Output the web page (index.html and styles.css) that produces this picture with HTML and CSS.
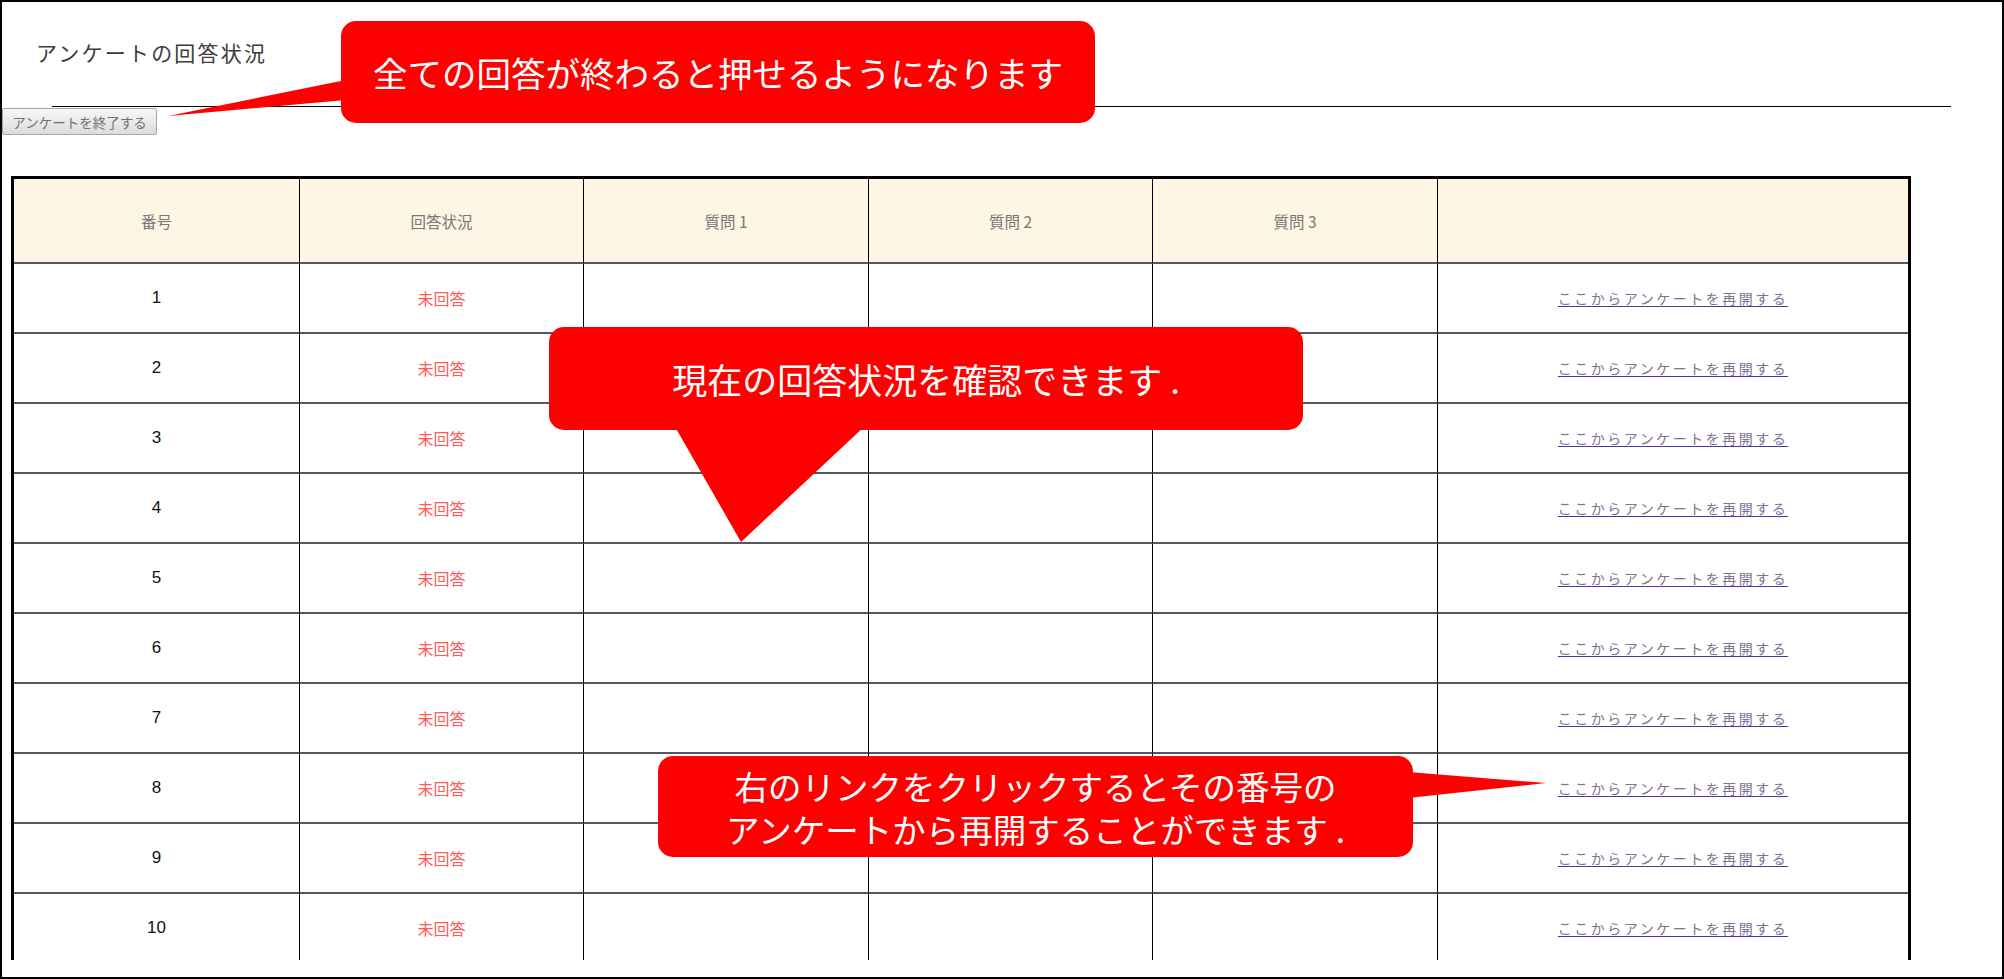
FILE: index.html
```html
<!DOCTYPE html>
<html lang="ja">
<head>
<meta charset="utf-8">
<title>アンケートの回答状況</title>
<link rel="stylesheet" href="styles.css">
</head>
<body>
<div class="frame">
  <div class="viewport">
    <div class="title">アンケートの回答状況</div>
    <div class="rule"></div>
    <button class="end-btn" type="button">アンケートを終了する</button>
    <table class="status">
      <thead>
        <tr>
          <th class="c1">番号</th>
          <th class="c2">回答状況</th>
          <th class="c3">質問 1</th>
          <th class="c4">質問 2</th>
          <th class="c5">質問 3</th>
          <th class="c6"></th>
        </tr>
      </thead>
      <tbody>
        <tr><td class="num">1</td><td class="st">未回答</td><td></td><td></td><td></td><td class="lk"><a class="resume" href="#">ここからアンケートを再開する</a></td></tr>
        <tr><td class="num">2</td><td class="st">未回答</td><td></td><td></td><td></td><td class="lk"><a class="resume" href="#">ここからアンケートを再開する</a></td></tr>
        <tr><td class="num">3</td><td class="st">未回答</td><td></td><td></td><td></td><td class="lk"><a class="resume" href="#">ここからアンケートを再開する</a></td></tr>
        <tr><td class="num">4</td><td class="st">未回答</td><td></td><td></td><td></td><td class="lk"><a class="resume" href="#">ここからアンケートを再開する</a></td></tr>
        <tr><td class="num">5</td><td class="st">未回答</td><td></td><td></td><td></td><td class="lk"><a class="resume" href="#">ここからアンケートを再開する</a></td></tr>
        <tr><td class="num">6</td><td class="st">未回答</td><td></td><td></td><td></td><td class="lk"><a class="resume" href="#">ここからアンケートを再開する</a></td></tr>
        <tr><td class="num">7</td><td class="st">未回答</td><td></td><td></td><td></td><td class="lk"><a class="resume" href="#">ここからアンケートを再開する</a></td></tr>
        <tr><td class="num">8</td><td class="st">未回答</td><td></td><td></td><td></td><td class="lk"><a class="resume" href="#">ここからアンケートを再開する</a></td></tr>
        <tr><td class="num">9</td><td class="st">未回答</td><td></td><td></td><td></td><td class="lk"><a class="resume" href="#">ここからアンケートを再開する</a></td></tr>
        <tr><td class="num">10</td><td class="st">未回答</td><td></td><td></td><td></td><td class="lk"><a class="resume" href="#">ここからアンケートを再開する</a></td></tr>
      </tbody>
    </table>
  </div>

  <div class="overlay">
    <svg class="pointers" width="2004" height="979" viewBox="0 0 2004 979" xmlns="http://www.w3.org/2000/svg">
      <polygon points="346,80 346,100 168,116" fill="#ff0000"/>
      <polygon points="674,425 866,425 741,542" fill="#ff0000"/>
      <polygon points="1408,772 1408,798 1546,783" fill="#ff0000"/>
    </svg>
    <div class="callout callout-1"><p class="callout-text">全ての回答が終わると押せるようになります</p></div>
    <div class="callout callout-2"><p class="callout-text">現在の回答状況を確認できます<span class="dot">.</span></p></div>
    <div class="callout callout-3"><p class="callout-text">右のリンクをクリックするとその番号の<br>アンケートから再開することができます<span class="dot">.</span></p></div>
  </div>
</div>
</body>
</html>
```

FILE: styles.css
```css
html, body {
  margin: 0;
  padding: 0;
  background: #ffffff;
}

body {
  font-family: "Noto Sans CJK JP", "Noto Sans", sans-serif;
}

.frame {
  position: relative;
  width: 2004px;
  height: 979px;
  border: 2px solid #000;
  box-sizing: border-box;
  overflow: hidden;
  background: #fff;
}

.viewport {
  height: 958px;
  overflow: hidden;
}

.title {
  padding: 35px 0 0 34px;
  font-size: 21px;
  line-height: 30px;
  letter-spacing: 2.2px;
  color: #3d3d3d;
}

.rule {
  margin: 39px 0 0 50px;
  width: 1899px;
  height: 0;
  border-top: 1px solid #000;
}

.end-btn {
  display: block;
  margin: 1px 0 0 0;
  width: 155px;
  height: 27px;
  padding: 0;
  font-family: "Noto Sans CJK JP", sans-serif;
  font-size: 13.5px;
  color: #707070;
  background: linear-gradient(#f7f7f7, #dcdcdc);
  border: 1px solid #a6a6a6;
  border-radius: 2px;
  box-sizing: border-box;
}

.status {
  margin: 41px 0 0 9px;
  width: 1900px;
  table-layout: fixed;
  border-collapse: separate;
  border-spacing: 0;
  border: 3px solid #000;
  border-bottom: none;
}

.status th,
.status td {
  padding: 0;
  text-align: center;
  vertical-align: middle;
  border-right: 1px solid #000;
  border-bottom: 2px solid #585858;
  box-sizing: border-box;
}

.status th:last-child,
.status td:last-child {
  border-right: none;
}

.status th {
  height: 85px;
  background: #fef5e4;
  font-weight: normal;
  font-size: 15.5px;
  color: #777;
}

.status td {
  height: 70px;
}

.c1 { width: 286px; }
.c2 { width: 284px; }
.c3 { width: 285px; }
.c4 { width: 284px; }
.c5 { width: 285px; }
.c6 { width: 470px; }

.num {
  font-family: "Liberation Sans", Arial, sans-serif;
  font-size: 17px;
  color: #111;
}

.st {
  font-size: 16px;
  color: #ff5a5a;
}

.lk {
  font-size: 14px;
  line-height: 18px;
}

.resume {
  font-size: 14px;
  letter-spacing: 2.5px;
  color: #7d7393;
  text-decoration: underline;
  text-decoration-color: #5f2fa0;
  text-underline-offset: 2px;
}

.overlay {
  position: absolute;
  left: -2px;
  top: -2px;
  width: 2004px;
  height: 979px;
  pointer-events: none;
}

.pointers {
  position: absolute;
  left: 0;
  top: 0;
}

.callout {
  position: absolute;
  display: flex;
  align-items: center;
  justify-content: center;
  background: #ff0000;
  color: #fff;
  border-radius: 15px;
  font-size: 34.5px;
  line-height: 43px;
}

.callout-text {
  margin: 0;
  text-align: center;
  white-space: nowrap;
}

.callout .dot {
  padding-left: 8px;
}

.callout-1 {
  left: 341px;
  top: 21px;
  width: 754px;
  height: 102px;
}

.callout-2 {
  left: 549px;
  top: 327px;
  width: 754px;
  height: 103px;
  font-size: 35px;
}

.callout-3 {
  left: 658px;
  top: 756px;
  width: 755px;
  height: 101px;
  font-size: 33.5px;
}
```
